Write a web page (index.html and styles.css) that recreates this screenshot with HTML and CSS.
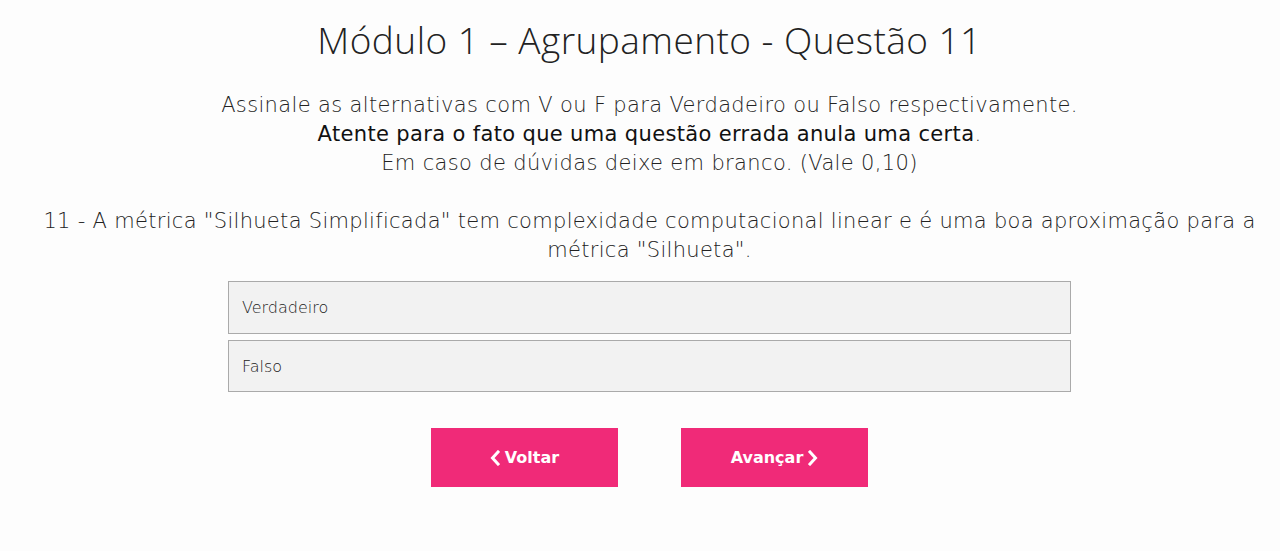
FILE: index.html
```html
<!DOCTYPE html>
<html lang="pt-BR">
<head>
<meta charset="utf-8">
<title>Módulo 1 – Agrupamento - Questão 11</title>
<link rel="stylesheet" href="styles.css">
</head>
<body>
<main class="page">
  <h1 class="title">Módulo 1 – Agrupamento - Questão 11</h1>
  <div class="instructions">
    <p>Assinale as alternativas com V ou F para Verdadeiro ou Falso respectivamente.</p>
    <p><strong>Atente para o fato que uma questão errada anula uma certa</strong>.</p>
    <p>Em caso de dúvidas deixe em branco. (Vale 0,10)</p>
  </div>
  <p class="question">11 - A métrica "Silhueta Simplificada" tem complexidade computacional linear e é uma boa aproximação para a métrica "Silhueta".</p>
  <div class="options">
    <div class="option">Verdadeiro</div>
    <div class="option">Falso</div>
  </div>
  <div class="nav">
    <button class="btn"><svg class="chev" viewBox="0 0 10 16" width="10" height="16"><path d="M8 2 L2.5 8 L8 14" fill="none" stroke="#fff" stroke-width="3" stroke-linecap="square"/></svg>Voltar</button>
    <button class="btn">Avançar<svg class="chev" viewBox="0 0 10 16" width="10" height="16"><path d="M2 2 L7.5 8 L2 14" fill="none" stroke="#fff" stroke-width="3" stroke-linecap="square"/></svg></button>
  </div>
</main>
</body>
</html>
```
FILE: styles.css
```css
html, body {
  margin: 0;
  padding: 0;
  background: #fdfdfd;
}
body {
  font-family: "DejaVu Sans", "Open Sans", sans-serif;
  color: #222;
}
.page {
  width: 1241px;
  margin: 0 0 0 29px;
  padding-top: 16px;
  text-align: center;
}
.title {
  margin: 0;
  font-family: "Open Sans", sans-serif;
  font-weight: 300;
  font-size: 37px;
  line-height: 48px;
  letter-spacing: 0.45px;
  color: #222;
}
.instructions {
  margin-top: 27px;
  font-size: 21px;
  line-height: 29px;
  font-weight: 200;
  letter-spacing: 0.35px;
  color: #222;
}
.instructions p { margin: 0; }
.instructions strong { font-weight: 400; color: #111; }
.question {
  margin: 29px 0 0;
  font-size: 21px;
  line-height: 29px;
  font-weight: 200;
  letter-spacing: 0.3px;
  color: #222;
}
.options {
  width: 843px;
  margin: 16px auto 0;
  display: flex;
  flex-direction: column;
  gap: 6px;
}
.option {
  box-sizing: border-box;
  height: 53px;
  border: 1px solid #aaa;
  background: #f2f2f2;
  text-align: left;
  padding-left: 13px;
  display: flex;
  align-items: center;
  font-size: 16px;
  font-weight: 200;
  color: #222;
}
.option + .option { height: 52px; }
.nav {
  margin-top: 36px;
  display: flex;
  justify-content: center;
  gap: 63px;
}
.btn {
  width: 187px;
  height: 59px;
  border: 0;
  background: #f02a78;
  color: #fff;
  font-family: "DejaVu Sans", Verdana, sans-serif;
  font-weight: bold;
  font-size: 16px;
  display: flex;
  align-items: center;
  justify-content: center;
  gap: 5px;
  padding: 0;
}
.chev { display: block; }
```
